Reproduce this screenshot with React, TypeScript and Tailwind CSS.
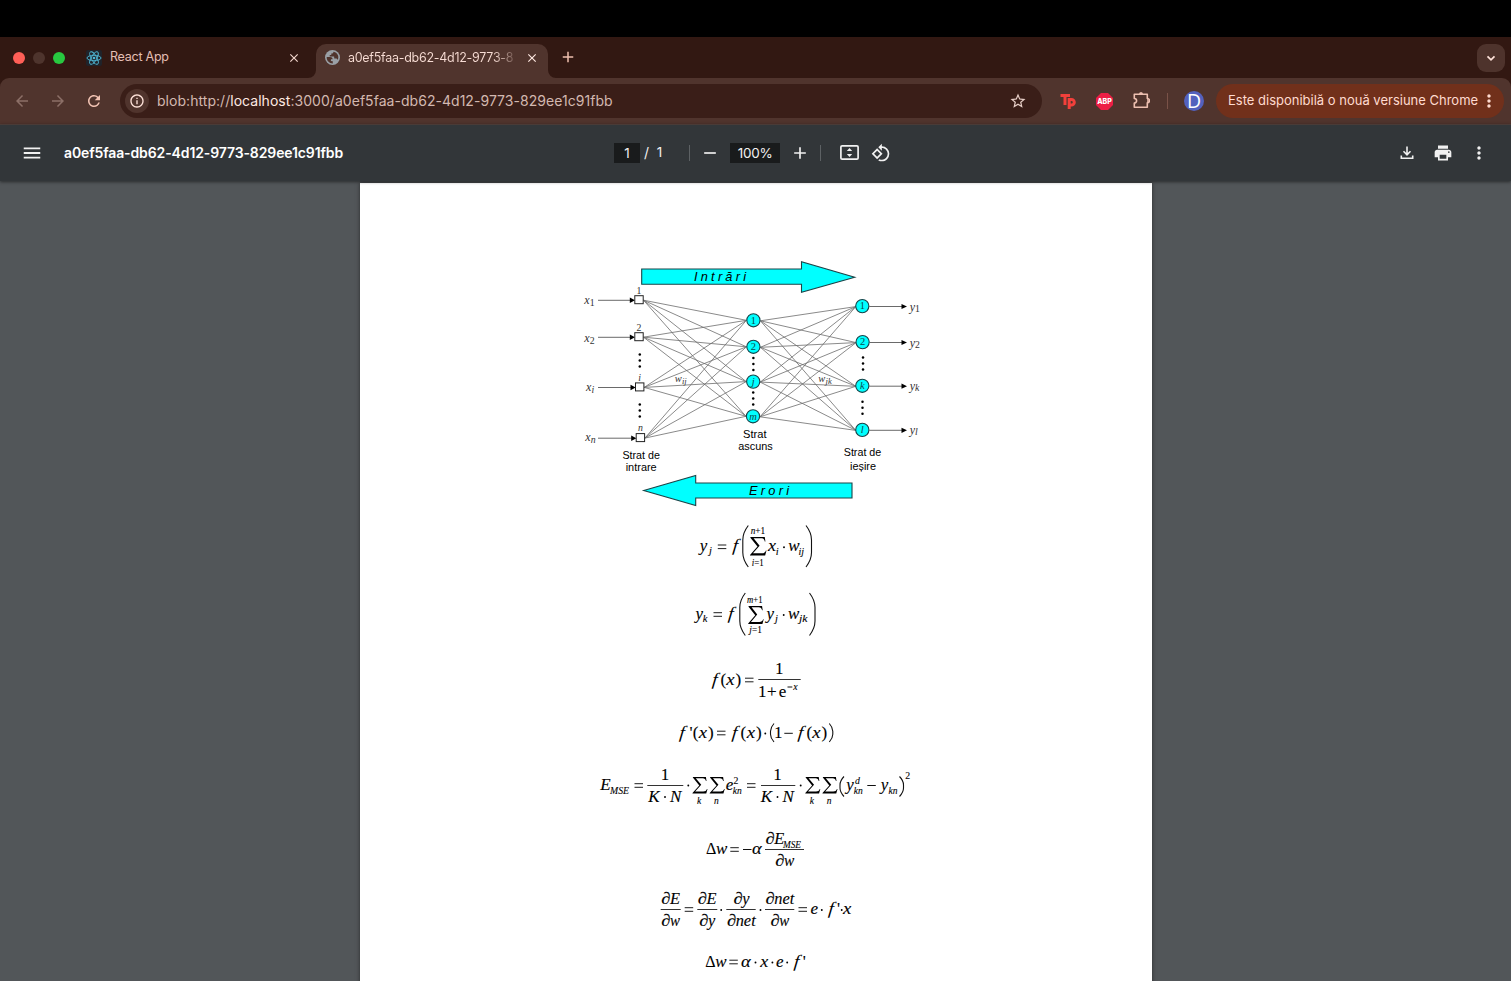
import type { ReactNode } from "react";
import {
  MdAdd,
  MdArrowBack,
  MdArrowForward,
  MdClose,
  MdInfoOutline,
  MdMenu,
  MdMoreVert,
  MdPrint,
  MdRefresh,
  MdRemove,
  MdRotate90DegreesCcw,
  MdStarBorder,
} from "react-icons/md";

const DOC = "a0ef5faa-db62-4d12-9773-829ee1c91fbb";

function ReactLogo() {
  return (
    <svg className="size-4" viewBox="0 0 16 16" fill="none" stroke="#4fb6d3" strokeWidth="0.9">
      <rect width="16" height="16" rx="2" fill="#20232a" stroke="none" />
      <ellipse cx="8" cy="8" rx="7" ry="2.7" />
      <ellipse cx="8" cy="8" rx="7" ry="2.7" transform="rotate(60 8 8)" />
      <ellipse cx="8" cy="8" rx="7" ry="2.7" transform="rotate(120 8 8)" />
      <circle cx="8" cy="8" r="1.3" fill="#4fb6d3" stroke="none" />
    </svg>
  );
}

function Globe() {
  return (
    <svg className="mb-px size-[15px]" viewBox="0 0 16 16">
      <circle cx="8" cy="8" r="8" fill="#9aa0a6" />
      <path
        d="M1.800 7.500h3.600c1.600 0 2.700 1 2.700 2.300H6.300v2l2 .1v2.400C4.600 14.400 1.600 11.500 1.800 7.500z M9.200 1.800c-.4 1.500-1 1.900-2.500 1.900v1.700H5v1.500h4.700l.2 2.200h1.800c1 0 1.400.7 1.900 1.500C15.400 6.500 13.200 2.500 9.200 1.800z"
        fill="#50342d"
      />
    </svg>
  );
}

function TabStrip() {
  return (
    <div className="flex h-[41px] items-end bg-[#321812]">
      <div className="flex h-[41px] w-[308px] shrink-0 items-center pl-[13px]">
        <span className="size-3 rounded-full bg-[#ff5f57]" />
        <span className="ml-2 size-3 rounded-full bg-[#4e342d]" />
        <span className="ml-2 size-3 rounded-full bg-[#28c840]" />
        <span className="ml-[21px]">
          <ReactLogo />
        </span>
        <span className="ml-2 text-[12.5px] tracking-[-0.02em] text-[#e4bfb4]">React App</span>
        <MdClose className="ml-auto mr-[7px] size-[14px] text-[#f2d5cc]" />
      </div>
      <svg className="h-2 w-2 shrink-0" viewBox="0 0 8 8">
        <path d="M8 0v8H0a8 8 0 0 0 8-8z" fill="#50342d" />
      </svg>
      <div className="flex h-[34px] w-[232px] shrink-0 items-center rounded-t-[10px] bg-[#50342d] pb-[6px] pl-[9px]">
        <Globe />
        <span className="ml-2 w-[168px] whitespace-nowrap text-[12.5px] tracking-[-0.022em]">
          <span className="bg-linear-to-r from-[#f8ddd5] from-88% to-[#f8ddd5]/25 bg-clip-text text-transparent">
            {DOC.slice(0, 25)}
          </span>
        </span>
        <MdClose className="ml-[9px] size-[14px] text-[#ffe9e2]" />
      </div>
      <svg className="h-2 w-2 shrink-0" viewBox="0 0 8 8">
        <path d="M0 0v8h8a8 8 0 0 1-8-8z" fill="#50342d" />
      </svg>
      <MdAdd className="mb-[12px] ml-[3px] size-[18px] text-[#eebfae]" />
      <div className="mb-[6px] ml-auto mr-[6px] grid size-7 place-items-center rounded-[9px] bg-[#4e332c]">
        <svg className="size-3" viewBox="0 0 12 12" fill="none" stroke="#ffe3da" strokeWidth="1.7">
          <path d="M2.500 4.300 6 7.800l3.500-3.500" />
        </svg>
      </div>
    </div>
  );
}

function AddressBar() {
  return (
    <div className="bg-[#321812]">
      <div className="flex h-[46px] items-center rounded-t-[9px] bg-[#50342d]">
        <MdArrowBack className="ml-[13px] size-[18px] text-[#8c6f67]" />
        <MdArrowForward className="ml-[18px] size-[18px] text-[#8c6f67]" />
        <MdRefresh className="ml-[18px] size-[18px] text-[#f2c3b3]" />
        <div className="ml-[17px] flex h-[34px] w-[922px] items-center rounded-full bg-[#3a1e18] pl-[5px] pr-[15px]">
          <span className="grid size-6 place-items-center rounded-full bg-[#50342d]">
            <MdInfoOutline className="size-4 text-[#ffe3da]" />
          </span>
          <span className="ml-2 whitespace-nowrap pb-[2px] text-[14px] tracking-[0.04px] text-[#d3b8b0]">
            blob:http://<span className="text-[#ffe9e2]">localhost</span>:3000/{DOC}
          </span>
          <MdStarBorder className="ml-auto size-[18px] text-[#e8d0c8]" />
        </div>
        <svg className="ml-[18px] h-4 w-4" viewBox="0 0 16 16" fill="none" stroke="#f2403b" strokeWidth="3">
          <path d="M.5 2.500H10M5 1.500V12M9.200 16V6.500h2.300a2.700 2.700 0 0 1 0 5.600H9.500" />
        </svg>
        <svg className="ml-5 size-[17px]" viewBox="0 0 17 17">
          <path d="M5 0h7l5 5v7l-5 5H5l-5-5V5z" fill="#ed1e45" />
          <text x="8.500" y="11" textAnchor="middle" fontSize="7" fontWeight="800" fill="#fff">
            ABP
          </text>
        </svg>
        <svg className="mb-px ml-5 size-[17px]" viewBox="0 0 17 17" fill="none" stroke="#edbfb0" strokeWidth="1.6">
          <path d="M1.300 2.300h13v4.200a2 2 0 0 1 0 4.200v4.500h-13v-4.100a2.300 2.300 0 0 0 0-4.600z" strokeLinejoin="round" />
          <path d="M6.300 2a1.700 1.700 0 0 1 3.400 0zM14.500 7a1.700 1.700 0 0 1 0 3.200z" fill="#edbfb0" strokeWidth="0.5" />
        </svg>
        <span className="ml-[17px] h-4 w-px bg-[#7a5248]" />
        <span className="ml-4 grid size-5 place-items-center rounded-full bg-[#5361bd] font-['Open_Sans',sans-serif] text-[19.5px] leading-5 text-white">
          D
        </span>
        <div className="ml-3 flex h-[34px] w-[288px] items-center rounded-full bg-[#71301b] pl-3 text-[13px] text-[#ffdbd0]">
          <span className="w-[250px] whitespace-nowrap">Este disponibilă o nouă versiune Chrome</span>
          <MdMoreVert className="ml-px size-[20px]" />
        </div>
      </div>
    </div>
  );
}

function PdfToolbar() {
  return (
    <div className="relative flex h-[57px] items-center border-t border-[#4a3b37] bg-[#323639] pb-px text-[#f1f1f1] shadow-[0_1px_3px_rgba(0,0,0,0.5)]">
      <MdMenu className="ml-[21px] size-[22px]" />
      <span className="ml-[21px] w-[550px] whitespace-nowrap text-[14px] font-semibold tracking-[-0.12px] text-white">{DOC}</span>
      <span className="grid h-5 w-[26px] place-items-center bg-[#191b1c] text-[13.500px]">1</span>
      <span className="ml-1 text-[14px]">/</span>
      <span className="ml-[6px] w-[9px] text-center text-[13.500px]">1</span>
      <span className="ml-[25px] h-4 w-px bg-[#5d6164]" />
      <MdRemove className="ml-[10px] size-5" />
      <span className="ml-[10px] grid h-5 w-[50px] place-items-center bg-[#191b1c] text-[13.500px] tracking-[-0.02em]">100%</span>
      <MdAdd className="ml-[10px] size-5" />
      <span className="ml-[10px] h-4 w-px bg-[#5d6164]" />
      <svg className="ml-[19px] h-[15px] w-[19px]" viewBox="0 0 19 15">
        <rect x="0.900" y="0.900" width="17.200" height="13.200" rx="1.200" fill="none" stroke="#f1f1f1" strokeWidth="1.700" />
        <path d="M9.500 3 12.200 6H6.800zM9.500 12 12.200 9H6.800z" fill="#f1f1f1" />
      </svg>
      <MdRotate90DegreesCcw className="ml-3 size-[20px]" />
      <svg className="ml-auto size-[14px]" viewBox="0 0 14 14" fill="none" stroke="#f1f1f1" strokeWidth="1.600">
        <path d="M7 .5v8M3.500 5.300 7 8.800l3.500-3.500M1.300 9.500v2.700h11.400V9.500" />
      </svg>
      <MdPrint className="ml-[19px] size-5" />
      <MdMoreVert className="ml-4 mr-[22px] size-5" />
    </div>
  );
}

type TProps = {
  x: number;
  y: number;
  s?: number;
  w?: number;
  up?: boolean;
  mid?: boolean;
  children: ReactNode;
};

/* One run of formula text: italic unless `up`, stretched to `w` when given. */
function T({ x, y, s = 17, w, up, mid, children }: TProps) {
  return (
    <text
      x={x}
      y={y}
      fontSize={s}
      textLength={w}
      lengthAdjust={w ? "spacingAndGlyphs" : undefined}
      fontStyle={up ? "normal" : "italic"}
      textAnchor={mid ? "middle" : "start"}
      stroke="currentColor"
      strokeWidth={s > 12 ? 0.12 : 0.1}
    >
      {children}
    </text>
  );
}

/* The function name f, slightly wider and more slanted than the other letters. */
const F = ({ x, y }: { x: number; y: number }) => (
  <g transform={`translate(${x - 0.3} ${y}) skewX(-6) scale(1.08 1)`}>
    <text x="0" y="0" fontSize="17.500" fontStyle="italic">
      f
    </text>
  </g>
);

const Dot = ({ x, y }: { x: number; y: number }) => <circle cx={x} cy={y} r="0.95" />;

const Bar = ({ x1, x2, y }: { x1: number; x2: number; y: number }) => (
  <path d={`M${x1} ${y}H${x2}`} stroke="#333" strokeWidth="1" />
);

const Eq = ({ x, y, w = 8.5 }: { x: number; y: number; w?: number }) => (
  <path d={`M${x} ${y - 1.8}h${w}M${x} ${y + 1.8}h${w}`} stroke="#111" strokeWidth="0.95" />
);

const Minus = ({ x, y, w = 8.5 }: { x: number; y: number; w?: number }) => (
  <path d={`M${x} ${y}h${w}`} stroke="#111" strokeWidth="1" />
);

function Sum({ x, y, w, h }: { x: number; y: number; w: number; h: number }) {
  return (
    <path
      transform={`translate(${x} ${y}) scale(${w / 17} ${h / 19})`}
      d="M.4 0H15.200L15.900 4.600H15.200C14.700 2.200 13.800 1.300 11.500 1.300H3.700L9.900 8.900 3 16.800H12.200C14.500 16.800 15.700 15.900 16.400 13.900H17L15.600 19H0V18.400L7.700 9.700 .4.700z"
    />
  );
}

function Paren({ x, y, w, h, right }: { x: number; y: number; w: number; h: number; right?: boolean }) {
  const a = right ? x : x + w;
  const b = right ? x + w - 0.5 : x + 0.5;
  const q = Math.min(h * 0.42, w * 2.4);
  return (
    <path
      d={`M${a} ${y}Q${b} ${y + q * 0.5} ${b} ${y + q}V${y + h - q}Q${b} ${y + h - q * 0.5} ${a} ${y + h}`}
      fill="none"
      stroke="#111"
      strokeWidth="1.1"
    />
  );
}

/* A full-width strip of the document page, addressed in document coordinates. */
function Strip({ top, height, children }: { top: number; height: number; children: ReactNode }) {
  return (
    <svg
      className="block w-[792px] shrink-0 font-['Liberation_Serif',serif] text-black"
      width="792"
      height={height}
      viewBox={`360 ${top} 792 ${height}`}
      fill="#000"
    >
      {children}
    </svg>
  );
}

const inputs = [
  { x: 639, y: 299.7, n: "1", ly: 293.5, up: true, lx: 584.3, by: 304, sub: "1" },
  { x: 639, y: 336.700, n: "2", ly: 330.500, up: true, lx: 584.3, by: 342, sub: "2" },
  { x: 639.7, y: 386.900, n: "i", ly: 380.500, up: false, lx: 586, by: 390.8, sub: "i" },
  { x: 640.4, y: 437.600, n: "n", ly: 430.500, up: false, lx: 585.3, by: 441.3, sub: "n" },
];
const hidden = [
  { x: 753.4, y: 320.300, n: "1", up: true },
  { x: 753.4, y: 346.800, n: "2", up: true },
  { x: 753.2, y: 381.600, n: "j", up: false },
  { x: 753, y: 416.300, n: "m", up: false },
];
const outputs = [
  { x: 862.3, y: 306.100, n: "1", up: true, by: 310.500 },
  { x: 862.6, y: 342.100, n: "2", up: true, by: 346.800 },
  { x: 862.3, y: 385.800, n: "k", up: false, by: 389.800 },
  { x: 862.3, y: 429.900, n: "l", up: false, by: 433.500 },
];
const dots: [number, number][] = [
  [639.8, 360.4],
  [639.8, 410.5],
  [753.4, 363.9],
  [753.2, 398.4],
  [863, 363.5],
  [862.5, 407.7],
];

function Label({ x, y, w, children }: { x: number; y: number; w: number; children: ReactNode }) {
  return (
    <text x={x - w / 2} y={y} textLength={w} lengthAdjust="spacingAndGlyphs" fontSize="11.300" className="font-['Liberation_Sans',sans-serif]">
      {children}
    </text>
  );
}

function Network() {
  return (
    <Strip top={183} height={332}>
      <g fill="#00ffff" stroke="#1c4448" strokeWidth="1.100">
        <path d="M641.700 269H801.500V261.700L854.700 277.200 801.500 292.300V284.300H641.700z" />
        <path d="M643.700 490.500 695.700 475.400V483H852V498H695.700V505.500z" />
      </g>
      <g className="font-['Liberation_Sans',sans-serif]" fontStyle="italic" fontSize="12.800">
        <text x="694" y="281.300" textLength="52">Intrări</text>
        <text x="749" y="495.200" textLength="40">Erori</text>
      </g>
      <g stroke="#6c6c6c" strokeWidth="0.8">
        {inputs.map((a) => hidden.map((b) => <path key={a.n + b.n} d={`M${a.x + 4.500} ${a.y + 0.500}L${b.x - 7} ${b.y}`} />))}
        {hidden.map((a) => outputs.map((b) => <path key={a.n + b.n} d={`M${a.x + 7} ${a.y + 0.500}L${b.x - 6.500} ${b.y + 0.500}`} />))}
      </g>
      {inputs.map((p) => (
        <g key={p.n}>
          <path d={`M598 ${p.y + 0.600}H632`} stroke="#444" strokeWidth="0.8" />
          <path d={`M${p.x - 9.200} ${p.y - 2.100}l5.200 2.700-5.200 2.700z`} />
          <rect x={p.x - 4.200} y={p.y - 4} width="8.400" height="8" fill="#fff" stroke="#222" />
          <g fill="#333" className="text-transparent">
            <T x={p.x} y={p.ly} s={9.8} up={p.up} mid>{p.n}</T>
            <T x={p.lx} y={p.by} s={12}>x</T>
            <T x={p.lx + 5.500} y={p.by + 2} s={9.8} up={p.up}>{p.sub}</T>
          </g>
        </g>
      ))}
      {[...hidden, ...outputs].map((p, i) => (
        <g key={i}>
          <circle cx={p.x} cy={p.y} r="6.600" fill="#00ffff" stroke="#174348" strokeWidth="1.100" />
          <g fill="#0b4a50" className="text-transparent">
            <T x={p.x} y={p.y + 3.200} s={10.500} up={p.up} mid>{p.n}</T>
          </g>
        </g>
      ))}
      {outputs.map((p) => (
        <g key={p.n}>
          <path d={`M${p.x + 7} ${p.y + 0.400}H903`} stroke="#444" strokeWidth="0.8" />
          <path d={`M901.500 ${p.y - 2.200}l5.500 2.600-5.500 2.600z`} />
          <g fill="#333" className="text-transparent">
            <T x={909.700} y={p.by} s={12}>y</T>
            <T x={914.900} y={p.by + 1.500} s={9.8} up={p.up}>{p.n}</T>
          </g>
        </g>
      ))}
      {dots.map(([x, y]) =>
        [-6, 0, 6].map((d) => <circle key={`${x}${y}${d}`} cx={x} cy={y + d} r="1.250" />),
      )}
      <g fill="#333" className="text-transparent">
        <T x={674.700} y={382.300} s={10.500}>w</T>
        <T x={682} y={384.300} s={8.500}>ij</T>
        <T x={818.300} y={382.300} s={10.500}>w</T>
        <T x={825.600} y={384.300} s={8.500}>jk</T>
      </g>
      <Label x={641.200} y={458.800} w={37.500}>Strat de</Label>
      <Label x={641.200} y={471} w={31}>intrare</Label>
      <Label x={754.800} y={437.700} w={23.500}>Strat</Label>
      <Label x={755.500} y={450} w={34.500}>ascuns</Label>
      <Label x={862.500} y={456} w={37.500}>Strat de</Label>
      <Label x={863} y={470.300} w={26}>ieșire</Label>
    </Strip>
  );
}

function HiddenOutput() {
  return (
    <Strip top={515} height={65}>
      <T x={699.800} y={551.300}>y</T>
      <T x={709} y={554} s={10.500}>j</T>
      <Eq x={717.800} y={546.800} />
      <F x={732.500} y={551.300} />
      <Paren x={742.300} y={525.500} w={6} h={41.500} />
      <T x={750.700} y={534} s={9.500} w={14.500}><tspan>n</tspan><tspan fontStyle="normal">+1</tspan></T>
      <Sum x={750} y={537} w={16.500} h={18.500} />
      <T x={751.700} y={565.500} s={9.500} w={12}><tspan>i</tspan><tspan fontStyle="normal">=1</tspan></T>
      <T x={768} y={551.300} w={8}>x</T>
      <T x={775.700} y={554.500} s={10.500}>i</T>
      <Dot x={784} y={547.300} />
      <T x={788.300} y={551.300}>w</T>
      <T x={798.500} y={554.500} s={10}>ij</T>
      <Paren x={806} y={525.500} w={6} h={41.500} right />
    </Strip>
  );
}

function FinalOutput() {
  return (
    <Strip top={580} height={68}>
      <T x={695.500} y={619}>y</T>
      <T x={702.700} y={622} s={10.500}>k</T>
      <Eq x={713.500} y={614.500} />
      <F x={728} y={619} />
      <Paren x={739.300} y={593} w={6} h={42.500} />
      <T x={747} y={603.200} s={9.500} w={15.500}><tspan>m</tspan><tspan fontStyle="normal">+1</tspan></T>
      <Sum x={748.200} y={606} w={15.500} h={18} />
      <T x={749.300} y={633} s={9.500} w={12.500}><tspan>j</tspan><tspan fontStyle="normal">=1</tspan></T>
      <T x={766.500} y={619}>y</T>
      <T x={775} y={622} s={10.500}>j</T>
      <Dot x={783.700} y={615} />
      <T x={788} y={619}>w</T>
      <T x={799} y={622} s={10.500} w={8.500}>jk</T>
      <Paren x={809.500} y={593} w={6} h={42.500} right />
    </Strip>
  );
}

function Sigmoid() {
  return (
    <Strip top={648} height={62}>
      <F x={712} y={685} />
      <T x={720.500} y={685} up>(</T>
      <T x={726.300} y={685} w={8.300}>x</T>
      <T x={735.500} y={685} up>)</T>
      <Eq x={745} y={680} />
      <T x={779.300} y={674} up mid>1</T>
      <Bar x1={758.300} x2={800.700} y={679.500} />
      <T x={758} y={696.700} up>1</T>
      <T x={767} y={696.700} up>+</T>
      <T x={778.700} y={696.700} up>e</T>
      <Minus x={787.500} y={687} w={4.800} />
      <T x={793.300} y={689.800} s={9.800}>x</T>
    </Strip>
  );
}

function Derivative() {
  return (
    <Strip top={710} height={45}>
      <F x={679.300} y={738} />
      <T x={689.500} y={738} up>'</T>
      <T x={692.700} y={738} up>(</T>
      <T x={698.700} y={738} w={8.300}>x</T>
      <T x={708} y={738} up>)</T>
      <Eq x={717} y={733} />
      <F x={731.700} y={738} />
      <T x={740.500} y={738} up>(</T>
      <T x={746.700} y={738} w={8.300}>x</T>
      <T x={756} y={738} up>)</T>
      <Dot x={765.300} y={733.500} />
      <Paren x={770} y={723.500} w={4} h={18.500} />
      <T x={774} y={738} up>1</T>
      <Minus x={784.300} y={733.300} />
      <F x={797.700} y={738} />
      <T x={806.500} y={738} up>(</T>
      <T x={812.300} y={738} w={8.300}>x</T>
      <T x={821.500} y={738} up>)</T>
      <Paren x={829.300} y={723.500} w={4} h={18.500} right />
    </Strip>
  );
}

function OneOverKN({ x, c, x2 }: { x: number; c: number; x2: number }) {
  return (
    <>
      <T x={c} y={780} up mid>1</T>
      <Bar x1={x} x2={x2} y={785.500} />
      <T x={c - 16.700} y={801.700} w={11.300}>K</T>
      <Dot x={c} y={797} />
      <T x={c + 5} y={801.700}>N</T>
    </>
  );
}

function MeanSquareError() {
  return (
    <Strip top={755} height={65}>
      <T x={600.200} y={790.300}>E</T>
      <T x={610} y={793.500} s={10} w={19}>MSE</T>
      <Eq x={634.500} y={785.500} />
      <OneOverKN x={647.300} c={665} x2={683.300} />
      <Dot x={688.300} y={785.500} />
      <Sum x={692.500} y={777} w={15} h={16.500} />
      <Sum x={709.700} y={777} w={15} h={16.500} />
      <T x={697} y={803.500} s={9.500}>k</T>
      <T x={714} y={803.500} s={9.500}>n</T>
      <T x={725.700} y={790.300}>e</T>
      <T x={733.500} y={783.500} s={9.800} up>2</T>
      <T x={732.700} y={793.700} s={10} w={9}>kn</T>
      <Eq x={747} y={785.500} />
      <OneOverKN x={761} c={777.500} x2={795.300} />
      <Dot x={800.700} y={785.500} />
      <Sum x={805.300} y={777} w={15} h={16.500} />
      <Sum x={822.500} y={777} w={15} h={16.500} />
      <T x={809.700} y={803.500} s={9.500}>k</T>
      <T x={826.700} y={803.500} s={9.500}>n</T>
      <Paren x={839.500} y={776.500} w={4.500} h={20} />
      <T x={846.300} y={790.300}>y</T>
      <T x={855} y={783.500} s={9.800}>d</T>
      <T x={853.700} y={793.700} s={10} w={9}>kn</T>
      <Minus x={867.300} y={785.500} />
      <T x={880.700} y={790.300}>y</T>
      <T x={888.500} y={793.700} s={10} w={9}>kn</T>
      <Paren x={899.500} y={776.500} w={4.500} h={20} right />
      <T x={905.300} y={778.500} s={9.800} up>2</T>
    </Strip>
  );
}

/* Partial derivative sign followed by an italic name. */
function D({ x, y, w, children }: { x: number; y: number; w: number; children: ReactNode }) {
  return (
    <>
      <T x={x - 0.300} y={y} s={17} w={9.200} up>∂</T>
      <T x={x + 8.500} y={y} w={w}>{children}</T>
    </>
  );
}

function WeightDelta() {
  return (
    <Strip top={820} height={60}>
      <T x={706} y={854.300} w={10.300} up>Δ</T>
      <T x={716} y={854.300}>w</T>
      <Eq x={730.300} y={849.500} />
      <Minus x={743} y={849.500} />
      <T x={752} y={854.300} w={9.700}>α</T>
      <Bar x1={765} x2={804} y={849.500} />
      <D x={765.700} y={844} w={10}>E</D>
      <T x={783} y={848} s={10} w={18}>MSE</T>
      <D x={775.500} y={866} w={10.300}>w</D>
    </Strip>
  );
}

function ChainRule() {
  return (
    <Strip top={880} height={60}>
      <D x={661.500} y={904} w={10}>E</D>
      <Bar x1={660.700} x2={680.700} y={909.500} />
      <D x={661.500} y={926} w={10}>w</D>
      <Eq x={684.700} y={909.500} />
      <D x={698} y={904} w={10}>E</D>
      <Bar x1={697.300} x2={717.300} y={909.500} />
      <D x={699.500} y={926} w={7.300}>y</D>
      <Dot x={721.200} y={910} />
      <D x={733.700} y={904} w={7.300}>y</D>
      <Bar x1={726.300} x2={755.700} y={909.500} />
      <D x={727.200} y={926} w={20}>net</D>
      <Dot x={760.500} y={910} />
      <D x={765.800} y={904} w={20}>net</D>
      <Bar x1={765} x2={794.300} y={909.500} />
      <D x={770.700} y={926} w={10}>w</D>
      <Eq x={798.500} y={909.500} />
      <T x={810.500} y={914.300}>e</T>
      <Dot x={821.800} y={910} />
      <F x={828.300} y={914.300} />
      <T x={837} y={914.300} up>'</T>
      <Dot x={841.700} y={910} />
      <T x={843} y={914.300} w={8.300}>x</T>
    </Strip>
  );
}

function WeightUpdate() {
  return (
    <Strip top={940} height={60}>
      <T x={705.200} y={966.700} w={10.300} up>Δ</T>
      <T x={715.200} y={966.700}>w</T>
      <Eq x={729.300} y={962} />
      <T x={741} y={966.700} w={9.700}>α</T>
      <Dot x={755.500} y={962.500} />
      <T x={760.300} y={966.700} w={8}>x</T>
      <Dot x={772.400} y={962.500} />
      <T x={776} y={966.700}>e</T>
      <Dot x={787.200} y={962.500} />
      <F x={793.800} y={966.700} />
      <T x={802.700} y={966.700} up>'</T>
    </Strip>
  );
}

export default function App() {
  return (
    <div className="flex h-[981px] w-[1511px] flex-col overflow-hidden bg-[#525659] font-['Inter',sans-serif]">
      <div className="h-[37px] shrink-0 bg-black" />
      <TabStrip />
      <AddressBar />
      <PdfToolbar />
      <main className="flex min-h-0 flex-1 justify-center overflow-hidden pt-[2px]">
        <div className="flex h-[820px] w-[792px] shrink-0 flex-col bg-white shadow-[0_0_4px_rgba(0,0,0,0.5)]">
          <Network />
          <HiddenOutput />
          <FinalOutput />
          <Sigmoid />
          <Derivative />
          <MeanSquareError />
          <WeightDelta />
          <ChainRule />
          <WeightUpdate />
        </div>
      </main>
    </div>
  );
}
